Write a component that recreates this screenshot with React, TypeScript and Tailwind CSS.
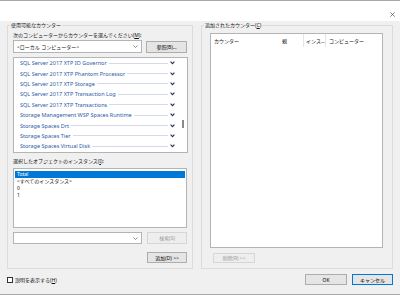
import React from 'react';

const COUNTERS = [
  'SQL Server 2017 XTP IO Governor',
  'SQL Server 2017 XTP Phantom Processor',
  'SQL Server 2017 XTP Storage',
  'SQL Server 2017 XTP Transaction Log',
  'SQL Server 2017 XTP Transactions',
  'Storage Management WSP Spaces Runtime',
  'Storage Spaces Drt',
  'Storage Spaces Tier',
  'Storage Spaces Virtual Disk',
  'Storage Spaces Write Cache',
];

const INSTANCES = ['Total', '<すべてのインスタンス>', '0', '1'];

const Chevron = () => (
  <svg width="5" height="4" viewBox="0 0 5 4" className="shrink-0">
    <path d="M0.6 0.6 L2.5 2.6 L4.4 0.6" stroke="#23304f" strokeWidth="1.1" fill="none" />
  </svg>
);

const ComboArrow = () => (
  <svg width="5" height="3" viewBox="0 0 5 3" className="shrink-0">
    <path d="M0.5 0.5 L2.5 2.5 L4.5 0.5" stroke="#606060" strokeWidth="0.7" fill="none" />
  </svg>
);

const Btn = ({ label, w, disabled, primary }: { label: string; w: string; disabled?: boolean; primary?: boolean }) => (
  <div
    className={`${w} h-full flex items-center justify-center border whitespace-nowrap ${
      disabled
        ? 'bg-[#eeeeee] border-[#d6d6d6] text-[#9a9a9a]'
        : primary
        ? 'bg-[#e5e5e5] border-[#0078d7] text-black'
        : 'bg-[#e5e5e5] border-[#adadad] text-black'
    }`}
  >
    {label}
  </div>
);

export default function App() {
  return (
    <div className="w-[400px] h-[295px] bg-[#f0f0f0] border-t border-b border-[#a8a8a8] font-['Noto_Sans','Noto_Sans_CJK_JP',sans-serif] text-[5px] leading-[6px] text-[#111] overflow-hidden">
      {/* title bar */}
      <div className="h-[20px] bg-white flex items-center justify-end pr-[5px] pt-[7px]">
        <svg width="5" height="5" viewBox="0 0 5 5">
          <path d="M0.3 0.3 L4.7 4.7 M4.7 0.3 L0.3 4.7" stroke="#333" strokeWidth="0.6" />
        </svg>
      </div>

      <div className="flex px-[7px] gap-[8px] pt-[1px]">
        {/* available counters */}
        <fieldset className="border border-[#dcdcdc] w-[188px] h-[247px] m-0 p-0 min-w-0">
          <legend className="ml-[2px] px-[1px] leading-[6px]">使用可能なカウンター</legend>
          <div className="px-[5px]">
            <div className="mt-[4px] h-[6px] whitespace-nowrap">次のコンピューターからカウンターを選んでください(<span className="underline">M</span>):</div>
            <div className="mt-[2px] flex items-start">
              <div className="w-[130px] h-[13px] bg-white border border-[#b4b4b4] flex items-center pl-[3px] pr-[3px]">
                <span className="flex-1">&lt;ローカル コンピューター&gt;</span>
                <ComboArrow />
              </div>
              <div className="ml-[4px] mt-[1px] h-[12px]">
                <Btn label="参照(B)..." w="w-[41px]" />
              </div>
            </div>

            <div className="mt-[4px] w-[175px] h-[96px] bg-white border border-[#b4b4b4] flex overflow-hidden">
              <div className="flex-1 min-w-0 h-[94px] overflow-hidden">
                {COUNTERS.map((c) => (
                  <div key={c} className="h-[10.4px] flex items-center pl-[6px] pr-[3px] text-[5.5px]">
                    <span className="text-[#2c5aa6] whitespace-nowrap">{c}</span>
                    <div className="flex-1 h-px bg-[#d5dbe6] mx-[2px]" />
                    <Chevron />
                  </div>
                ))}
              </div>
              <div className="w-[9px] shrink-0 flex justify-center">
                <div className="mt-[62px] w-[2px] h-[8px] bg-[#8a8a8a]" />
              </div>
            </div>

            <div className="mt-[5px] h-[6px] whitespace-nowrap">選択したオブジェクトのインスタンス(<span className="underline">I</span>):</div>
            <div className="mt-[4px] w-[174px] h-[60px] bg-white border border-[#b4b4b4] pt-[2px] px-[1px]">
              {INSTANCES.map((it, i) => (
                <div
                  key={it}
                  className={`h-[7px] leading-[7px] pl-[2px] ${i === 0 ? 'bg-[#0078d7] text-white' : ''}`}
                >
                  {it}
                </div>
              ))}
            </div>

            <div className="mt-[4px] flex h-[12px]">
              <div className="w-[130px] h-full bg-white border border-[#b4b4b4] flex items-center justify-end pr-[3px]">
                <ComboArrow />
              </div>
              <div className="ml-[5px] h-full">
                <Btn label="検索(S)" w="w-[40px]" disabled />
              </div>
            </div>

            <div className="mt-[8px] flex justify-end h-[11px]">
              <Btn label="追加(D) >>" w="w-[40px]" />
            </div>
          </div>
        </fieldset>

        {/* added counters */}
        <fieldset className="border border-[#dcdcdc] w-[194px] h-[247px] m-0 p-0 min-w-0">
          <legend className="ml-[2px] px-[1px] leading-[6px]">追加されたカウンター(<span className="underline">C</span>)</legend>
          <div className="px-[8px]">
            <div className="mt-[5px] w-[173px] h-[215px] bg-white border border-[#b4b4b4]">
              <div className="h-[13px] flex items-center whitespace-nowrap">
                <div className="w-[68px] pl-[3px]">カウンター</div>
                <div className="w-[24px] pl-[3px]">親</div>
                <div className="w-[22px] pl-[2px] border-l border-[#e5e5e5] h-full flex items-center overflow-hidden">インス...</div>
                <div className="flex-1 pl-[3px] border-l border-[#e5e5e5] h-full flex items-center">コンピューター</div>
              </div>
            </div>
            <div className="mt-[5px] ml-[3px] h-[10px] flex">
              <Btn label="削除(R) <<" w="w-[42px]" disabled />
            </div>
          </div>
        </fieldset>
      </div>

      {/* bottom row */}
      <div className="flex items-center px-[7px] mt-[5px] h-[11px]">
        <div className="w-[6px] h-[6px] bg-white border border-[#333]" />
        <span className="ml-[2px]">説明を表示する(<span className="underline">H</span>)</span>
        <div className="ml-auto h-full flex gap-[5px]">
          <Btn label="OK" w="w-[42px]" />
          <Btn label="キャンセル" w="w-[41px]" primary />
        </div>
      </div>
    </div>
  );
}
